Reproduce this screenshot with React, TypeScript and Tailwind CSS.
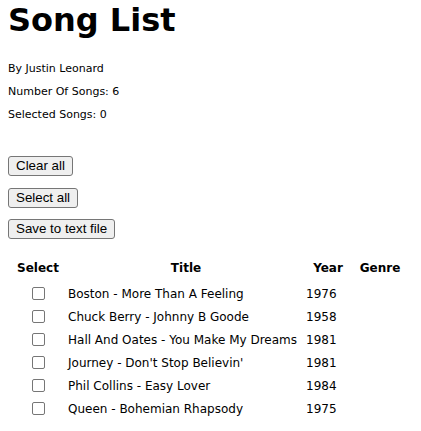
import React, { useState } from "react";

type Song = {
  artist: string;
  title: string;
  year: number;
  genre: string;
};

const songs: Song[] = [
  { artist: "Boston", title: "More Than A Feeling", year: 1976, genre: "" },
  { artist: "Chuck Berry", title: "Johnny B Goode", year: 1958, genre: "" },
  { artist: "Hall And Oates", title: "You Make My Dreams", year: 1981, genre: "" },
  { artist: "Journey", title: "Don't Stop Believin'", year: 1981, genre: "" },
  { artist: "Phil Collins", title: "Easy Lover", year: 1984, genre: "" },
  { artist: "Queen", title: "Bohemian Rhapsody", year: 1975, genre: "" },
];

const buttonClasses =
  "rounded-[3px] border border-[#767676] bg-[#efefef] px-[7px] py-[1px] text-[13.33px] leading-[16px] h-[20px] text-black [font-family:'Liberation_Sans',Arial,sans-serif]";

const App: React.FC = () => {
  const [selected, setSelected] = useState<boolean[]>(songs.map(() => false));

  const selectedCount = selected.filter(Boolean).length;

  return (
    <div className="min-h-screen bg-white px-2 text-black [font-family:'DejaVu_Sans',Verdana,sans-serif]">
      <h1 className="pt-[2px] text-[32px] font-bold leading-[37px]">Song List</h1>

      <div className="mt-[23px] flex flex-col gap-[10px] text-[11px] leading-[13px]">
        <p>By Justin Leonard</p>
        <p>Number Of Songs: {songs.length}</p>
        <p>Selected Songs: {selectedCount}</p>
      </div>

      <div className="mt-[35px] flex flex-col items-start gap-[11.5px]">
        <button
          type="button"
          className={buttonClasses}
          onClick={() => setSelected(songs.map(() => false))}
        >
          Clear all
        </button>
        <button
          type="button"
          className={buttonClasses}
          onClick={() => setSelected(songs.map(() => true))}
        >
          Select all
        </button>
        <button type="button" className={buttonClasses}>
          Save to text file
        </button>
      </div>

      <div className="mt-[16px] ml-[2px] text-[12px] leading-[14px]">
        <div className="grid h-[26px] grid-cols-[56px_236px_44px_56px] items-center gap-x-[2px] font-bold">
          <div className="text-center">Select</div>
          <div className="text-center">Title</div>
          <div className="text-center">Year</div>
          <div className="text-center">Genre</div>
        </div>
        <div className="mt-[2px] flex flex-col gap-[2px]">
          {songs.map((song, i) => (
            <div
              key={song.artist}
              className="grid h-[21px] grid-cols-[56px_236px_44px_56px] items-center gap-x-[2px]"
            >
              <div className="flex justify-center">
                <input
                  type="checkbox"
                  checked={selected[i]}
                  onChange={() =>
                    setSelected((prev) =>
                      prev.map((v, j) => (j === i ? !v : v))
                    )
                  }
                  className="h-[13px] w-[13px] appearance-none rounded-[2px] border border-[#767676] bg-white checked:bg-[#0075ff]"
                />
              </div>
              <div className="whitespace-nowrap">
                {song.artist} - {song.title}
              </div>
              <div>{song.year}</div>
              <div>{song.genre}</div>
            </div>
          ))}
        </div>
      </div>
    </div>
  );
};

export default App;
